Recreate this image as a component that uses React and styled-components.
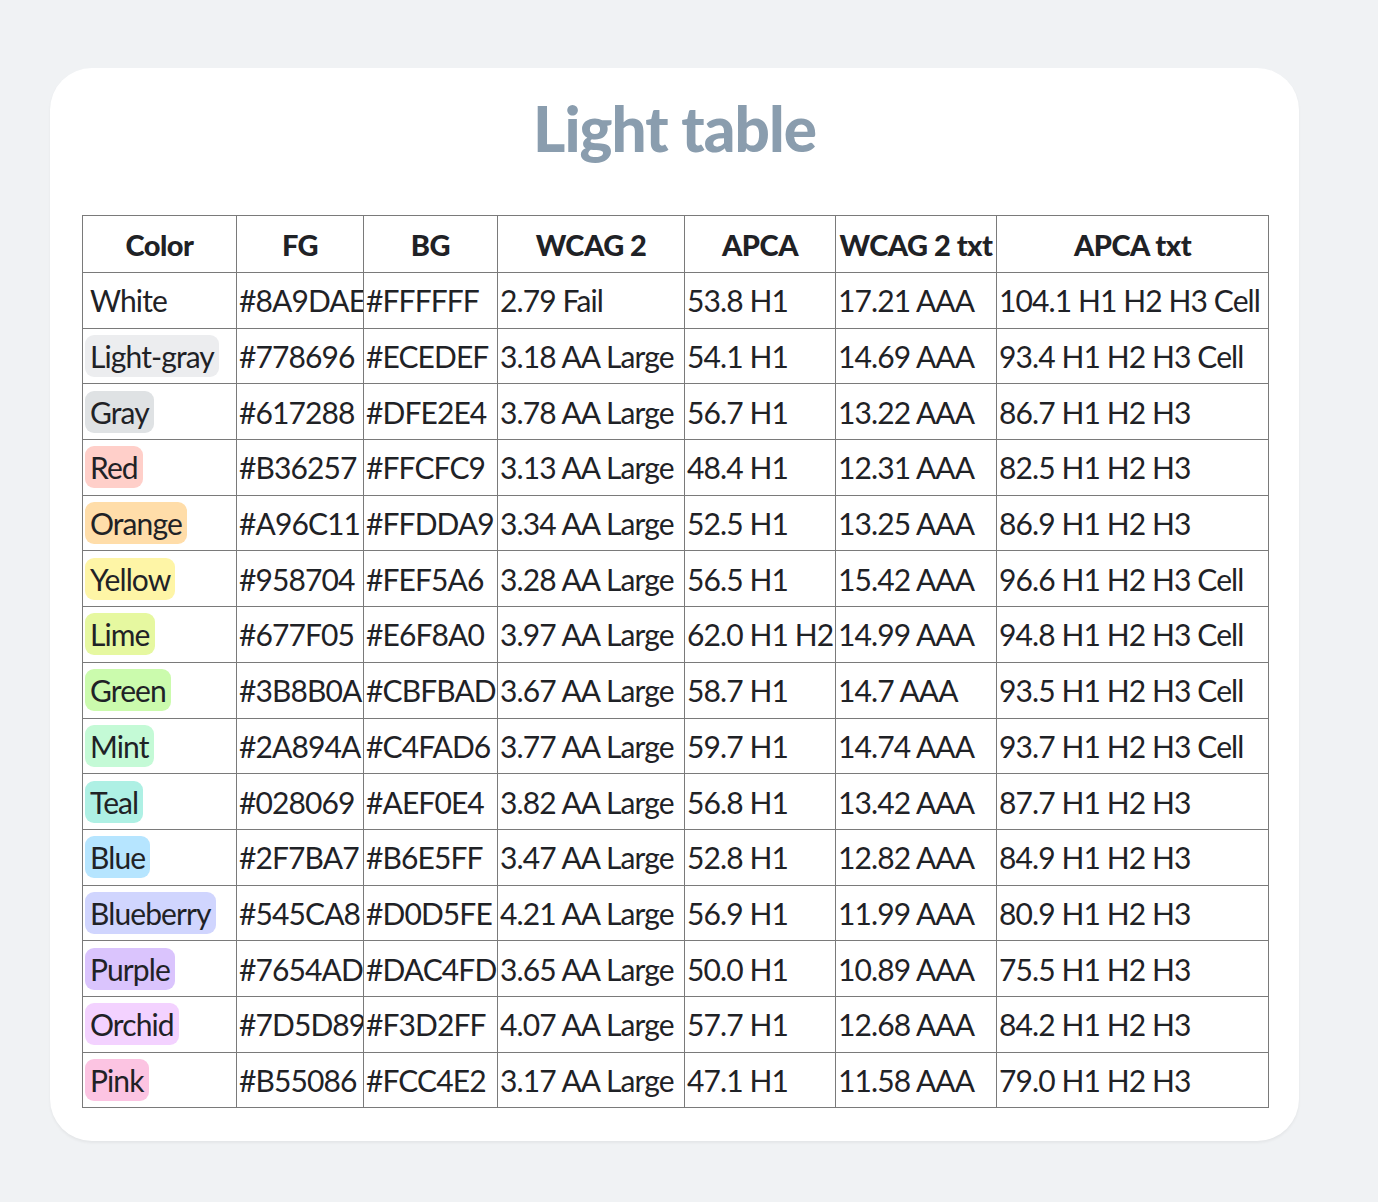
import React from "react";
import styled, { createGlobalStyle } from "styled-components";

const Global = createGlobalStyle`
  html, body { margin: 0; background: #f0f2f4; }
  body { font-family: Lato, "Noto Sans", sans-serif; }
`;

const Page = styled.div`
  padding: 68px 79px 60px 50px;
`;
const Card = styled.div`
  background: #fff;
  border-radius: 42px;
  box-shadow: 0 2px 3px rgba(0,0,0,0.05);
  padding: 10px 32px 33px 32px;
`;
const Title = styled.h1`
  margin: 0 0 37px;
  text-align: center;
  font-size: 62px;
  font-weight: 900;
  color: #8a9dae;
  letter-spacing: -1px;
  line-height: 100px;
`;
const Table = styled.table`
  border-collapse: collapse;
  table-layout: fixed;
  width: 1186px;
  font-size: 30px;
  color: #1f2226;
`;
const Row = styled.tr`
  height: ${p => (p.$head ? 57 : 55.7)}px;
`;
const Th = styled.th`
  border: 1.5px solid #7a7a7a;
  font-weight: 900;
  font-size: 29px;
  text-align: center;
  white-space: nowrap;
  overflow: hidden;
  padding: 0;
  letter-spacing: -0.5px;
`;
const Td = styled.td`
  border: 1.5px solid #7a7a7a;
  padding: 0 0 0 2px;
  white-space: nowrap;
  overflow: hidden;
  letter-spacing: -0.9px;
`;
const Tag = styled.span`
  display: inline-block;
  background: ${p => p.$bg};
  border-radius: 9px;
  padding: 1px 5px;
  line-height: 40px;
`;

const widths = [154, 127, 134, 187, 151, 161, 272];
const rows = [
  ["White","#8A9DAE","#FFFFFF","2.79 Fail","53.8 H1","17.21 AAA","104.1 H1 H2 H3 Cell"],
  ["Light-gray","#778696","#ECEDEF","3.18 AA Large","54.1 H1","14.69 AAA","93.4 H1 H2 H3 Cell"],
  ["Gray","#617288","#DFE2E4","3.78 AA Large","56.7 H1","13.22 AAA","86.7 H1 H2 H3"],
  ["Red","#B36257","#FFCFC9","3.13 AA Large","48.4 H1","12.31 AAA","82.5 H1 H2 H3"],
  ["Orange","#A96C11","#FFDDA9","3.34 AA Large","52.5 H1","13.25 AAA","86.9 H1 H2 H3"],
  ["Yellow","#958704","#FEF5A6","3.28 AA Large","56.5 H1","15.42 AAA","96.6 H1 H2 H3 Cell"],
  ["Lime","#677F05","#E6F8A0","3.97 AA Large","62.0 H1 H2","14.99 AAA","94.8 H1 H2 H3 Cell"],
  ["Green","#3B8B0A","#CBFBAD","3.67 AA Large","58.7 H1","14.7 AAA","93.5 H1 H2 H3 Cell"],
  ["Mint","#2A894A","#C4FAD6","3.77 AA Large","59.7 H1","14.74 AAA","93.7 H1 H2 H3 Cell"],
  ["Teal","#028069","#AEF0E4","3.82 AA Large","56.8 H1","13.42 AAA","87.7 H1 H2 H3"],
  ["Blue","#2F7BA7","#B6E5FF","3.47 AA Large","52.8 H1","12.82 AAA","84.9 H1 H2 H3"],
  ["Blueberry","#545CA8","#D0D5FE","4.21 AA Large","56.9 H1","11.99 AAA","80.9 H1 H2 H3"],
  ["Purple","#7654AD","#DAC4FD","3.65 AA Large","50.0 H1","10.89 AAA","75.5 H1 H2 H3"],
  ["Orchid","#7D5D89","#F3D2FF","4.07 AA Large","57.7 H1","12.68 AAA","84.2 H1 H2 H3"],
  ["Pink","#B55086","#FCC4E2","3.17 AA Large","47.1 H1","11.58 AAA","79.0 H1 H2 H3"],
];

export default function App() {
  return (
    <Page>
      <Global />
      <Card>
        <Title>Light table</Title>
        <Table>
          <colgroup>{widths.map((w, i) => <col key={i} style={{ width: w }} />)}</colgroup>
          <thead>
            <Row $head>{["Color","FG","BG","WCAG 2","APCA","WCAG 2 txt","APCA txt"].map(h => <Th key={h}>{h}</Th>)}</Row>
          </thead>
          <tbody>
            {rows.map(r => (
              <Row key={r[0]}>
                <Td><Tag $bg={r[2]}>{r[0]}</Tag></Td>
                {r.slice(1).map((c, i) => <Td key={i}>{c}</Td>)}
              </Row>
            ))}
          </tbody>
        </Table>
      </Card>
    </Page>
  );
}
